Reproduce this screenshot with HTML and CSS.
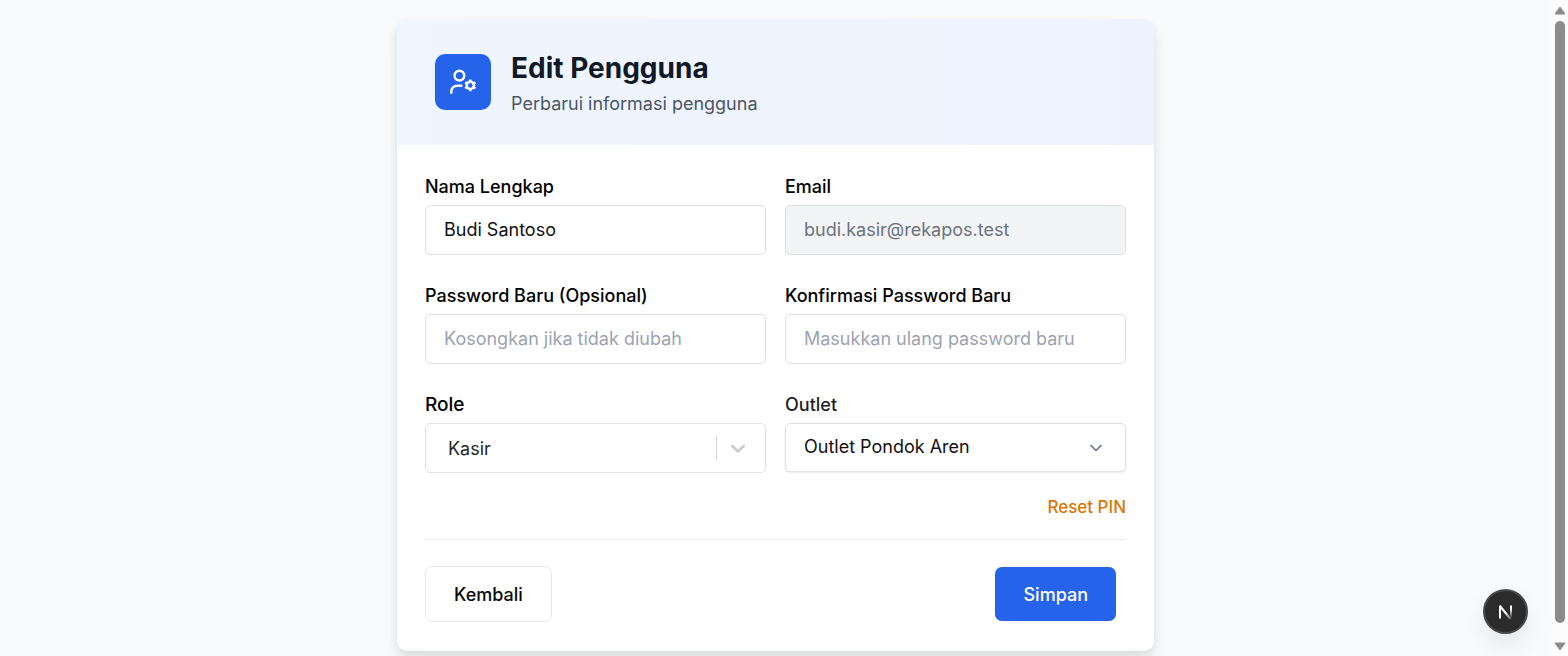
FILE: index.html
```html
<!DOCTYPE html>
<html lang="id">
<head>
  <meta charset="UTF-8">
  <meta name="viewport" content="width=device-width, initial-scale=1.0">
  <title>Edit Pengguna</title>
  <link rel="stylesheet" href="styles.css">
</head>
<body>
  <main class="page">
    <div class="card">
      <!-- Header -->
      <div class="card-header">
        <div class="header-icon">
          <svg width="28" height="28" viewBox="0 0 28 28" fill="none" stroke="#fff" stroke-width="2.4" stroke-linecap="round" stroke-linejoin="round" aria-hidden="true">
            <circle cx="10.4" cy="7.6" r="4.9"/>
            <path d="M2.3 24.8v-1.3a5.8 5.8 0 0 1 5.8-5.8h4.2"/>
            <circle cx="21.3" cy="17.4" r="3.6" stroke-width="2.6"/>
            <path stroke-width="2.6" stroke-linecap="butt" d="M21.3 14V11.6M21.3 21v2.3M24.3 15.7l2.1-1.2M18.3 19.1l-2.1 1.2M24.3 19.1l2.1 1.2M18.3 15.7l-2.1-1.2"/>
          </svg>
        </div>
        <div>
          <h1>Edit Pengguna</h1>
          <p>Perbarui informasi pengguna</p>
        </div>
      </div>

      <!-- Form -->
      <form class="card-body">
        <div class="form-grid">
          <div class="field">
            <label for="name">Nama Lengkap</label>
            <input type="text" id="name" value="Budi Santoso">
          </div>
          <div class="field">
            <label for="email">Email</label>
            <input type="email" id="email" value="budi.kasir@rekapos.test" disabled>
          </div>
          <div class="field">
            <label for="password">Password Baru (Opsional)</label>
            <input type="password" id="password" placeholder="Kosongkan jika tidak diubah">
          </div>
          <div class="field">
            <label for="password-confirm">Konfirmasi Password Baru</label>
            <input type="password" id="password-confirm" placeholder="Masukkan ulang password baru">
          </div>
          <div class="field">
            <label for="role" class="label-role">Role</label>
            <div class="select-wrap">
              <select id="role" class="select-role">
                <option>Kasir</option>
              </select>
              <span class="indicator indicator-role">
                <svg width="24" height="24" viewBox="0 0 20 20" fill="#ccc" aria-hidden="true">
                  <path d="M4.516 7.548c0.436-0.446 1.043-0.481 1.576 0l3.908 3.747 3.908-3.747c0.533-0.481 1.141-0.446 1.574 0 0.436 0.445 0.408 1.197 0 1.615-0.406 0.418-4.695 4.502-4.695 4.502-0.217 0.223-0.502 0.335-0.787 0.335s-0.57-0.112-0.789-0.335c0 0-4.287-4.084-4.695-4.502s-0.436-1.17 0-1.615z"/>
                </svg>
              </span>
            </div>
          </div>
          <div class="field">
            <label for="outlet" class="label-outlet">Outlet</label>
            <div class="select-wrap">
              <select id="outlet" class="select-outlet">
                <option>Outlet Pondok Aren</option>
              </select>
              <span class="indicator indicator-outlet">
                <svg width="20" height="20" viewBox="0 0 24 24" fill="none" stroke="#6b7280" stroke-width="2" stroke-linecap="round" stroke-linejoin="round" aria-hidden="true">
                  <path d="m6 9 6 6 6-6"/>
                </svg>
              </span>
            </div>
          </div>
        </div>

        <div class="reset-row">
          <button type="button" class="btn-reset">Reset PIN</button>
        </div>

        <div class="actions">
          <button type="button" class="btn btn-back">Kembali</button>
          <button type="submit" class="btn btn-save">Simpan</button>
        </div>
      </form>
    </div>
  </main>

  <!-- Scroll track -->
  <div class="scrollbar" aria-hidden="true">
    <svg width="12" height="9" viewBox="0 0 12 9"><path d="M6 1 11 8H1z" fill="#8b8b8b" stroke="#8b8b8b" stroke-linejoin="round"/></svg>
    <div class="thumb"></div>
    <svg width="12" height="9" viewBox="0 0 12 9"><path d="M6 8 11 1H1z" fill="#8b8b8b" stroke="#8b8b8b" stroke-linejoin="round"/></svg>
  </div>

  <!-- Dev tools badge -->
  <button type="button" class="dev-badge" aria-label="Open dev tools">
    <svg width="20" height="20" viewBox="0 0 20 20" fill="none" aria-hidden="true">
      <defs>
        <linearGradient id="fade-diagonal" x1="10" y1="10" x2="17" y2="19" gradientUnits="userSpaceOnUse">
          <stop stop-color="#fff"/>
          <stop offset="1" stop-color="#fff" stop-opacity="0"/>
        </linearGradient>
        <linearGradient id="fade-bar" x1="15" y1="3" x2="15" y2="16" gradientUnits="userSpaceOnUse">
          <stop offset="0.3" stop-color="#fff"/>
          <stop offset="1" stop-color="#fff" stop-opacity="0"/>
        </linearGradient>
      </defs>
      <path d="M4 4 14.5 17" stroke="url(#fade-diagonal)" stroke-width="2"/>
      <path d="M4 16.5V3.5" stroke="#fff" stroke-width="2"/>
      <path d="M15 3.5V15" stroke="url(#fade-bar)" stroke-width="2"/>
    </svg>
  </button>
</body>
</html>
```
FILE: styles.css
```css
* {
  box-sizing: border-box;
}

body {
  font-family: Inter, sans-serif;
  font-size: 18px;
  margin: 0;
  min-height: 100vh;
  display: flex;
  background: #f9fafb;
  color: #0a0a0a;
}

.page {
  flex: 1;
  padding: 19px 20px 5px;
}

.card {
  max-width: 757px;
  margin: 0 auto;
  background: #fff;
  border-radius: 10px;
  box-shadow: 0 4px 8px rgba(0, 0, 0, 0.08), 0 10px 18px rgba(0, 0, 0, 0.06);
  overflow: hidden;
}

/* Header */
.card-header {
  display: flex;
  align-items: center;
  gap: 20px;
  height: 126px;
  padding: 0 38px;
  background: linear-gradient(to right, #eff6ff, #eef2ff);
}

.header-icon {
  display: flex;
  align-items: center;
  justify-content: center;
  width: 56px;
  height: 56px;
  border-radius: 10px;
  background: #2563eb;
}

h1 {
  margin: 0;
  font-size: 28px;
  line-height: 40px;
  font-weight: 700;
  color: #111827;
}

.card-header p {
  margin: 4px 0 0;
  line-height: 24px;
  color: #4b5563;
}

/* Form */
.card-body {
  padding: 28px 28px 29px;
}

.form-grid {
  display: grid;
  grid-template-columns: 1fr 1fr;
  gap: 27px 19px;
}

.field {
  display: flex;
  flex-direction: column;
  gap: 4px;
}

label {
  line-height: 28px;
  font-weight: 500;
  color: #000;
}

.label-role {
  font-size: 19px;
}

.label-outlet {
  color: #1f1f1f;
}

input,
select {
  width: 100%;
  height: 50px;
  padding: 0 18px 2px;
  border: 1px solid #dcdfe3;
  border-radius: 5px;
  background: #fff;
  color: #111;
  font-family: inherit;
  font-size: 18px;
  appearance: none;
}

input::placeholder {
  color: #9ca3af;
}

input:disabled {
  background: #f3f4f6;
  color: #6b7280;
}

.select-wrap {
  position: relative;
}

.select-role {
  padding: 0 22px;
  color: #262626;
}

.select-outlet {
  height: 49px;
  box-shadow: 0 1px 2px rgba(0, 0, 0, 0.08);
}

.indicator {
  position: absolute;
  top: 13px;
  bottom: 13px;
  right: 16px;
  display: flex;
  align-items: center;
  pointer-events: none;
}

.indicator-role {
  padding-left: 9px;
  border-left: 1px solid #d4d4d4;
}

.indicator-outlet {
  right: 20px;
}

.reset-row {
  display: flex;
  justify-content: flex-end;
  margin: 22px 0 20px;
}

.btn-reset {
  padding: 0;
  border: none;
  background: none;
  color: #d97706;
  font-family: inherit;
  font-size: 17px;
  line-height: 24px;
  font-weight: 500;
  cursor: pointer;
}

.actions {
  display: flex;
  align-items: center;
  justify-content: space-between;
  padding: 26px 10px 0 0;
  border-top: 1px solid #e9ebee;
}

.btn {
  padding: 0 28px;
  height: 54px;
  border: none;
  border-radius: 7px;
  font-family: inherit;
  font-size: 18px;
  font-weight: 500;
  cursor: pointer;
}

.btn-back {
  height: 56px;
  border: 1px solid #e5e7eb;
  background: #fff;
  color: #0a0a0a;
}

.btn-save {
  background: #2563eb;
  color: #fff;
}

/* Scrollbar */
.scrollbar {
  position: sticky;
  top: 0;
  display: flex;
  flex-direction: column;
  align-items: center;
  gap: 6px;
  width: 17px;
  height: 100vh;
  padding: 6px 0 5px;
  background: #fcfcfc;
}

.thumb {
  width: 10px;
  flex: 1;
  margin-bottom: 13px;
  border-radius: 5px;
  background: #8b8b8b;
}

/* Floating badge */
.dev-badge {
  position: fixed;
  right: 40px;
  bottom: 22px;
  display: flex;
  align-items: center;
  justify-content: center;
  width: 45px;
  height: 45px;
  padding: 0;
  border: 2px solid #4a4a4a;
  border-radius: 50%;
  background: #2b2b2b;
  box-shadow: 0 12px 24px rgba(0, 0, 0, 0.08);
}
```
